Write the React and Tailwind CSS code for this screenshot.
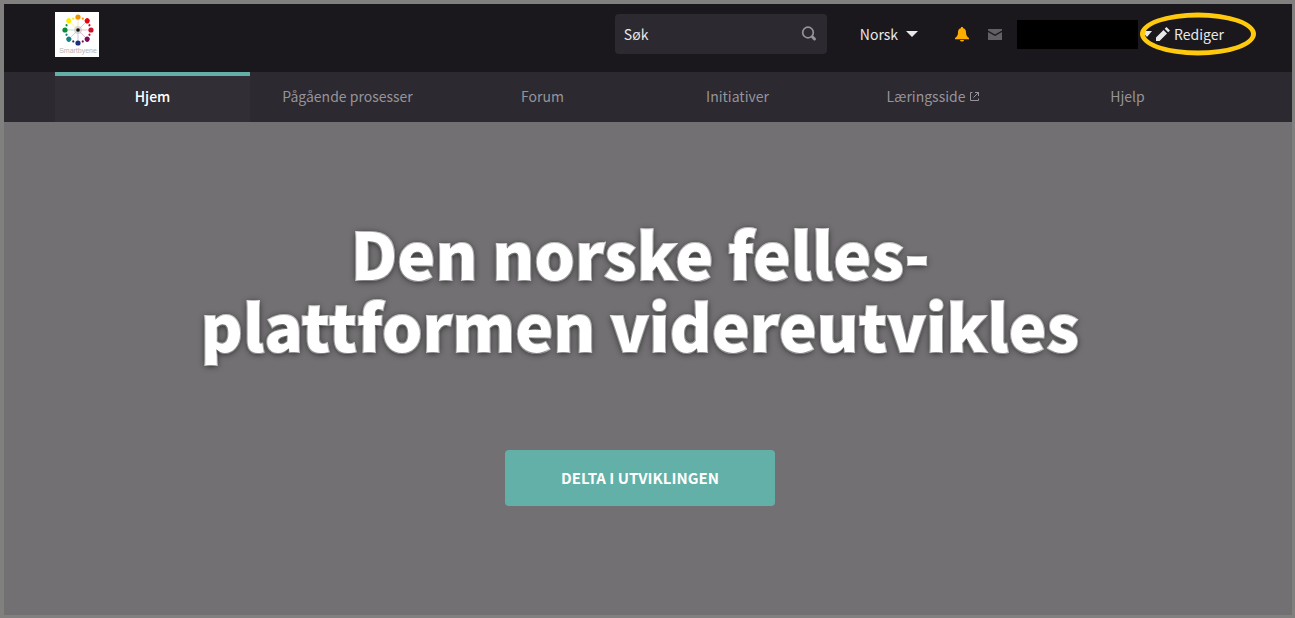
const navItems = [
  { label: 'Hjem', active: true },
  { label: 'Pågående prosesser' },
  { label: 'Forum' },
  { label: 'Initiativer' },
  { label: 'Læringsside', external: true },
  { label: 'Hjelp' },
];

// big and small dots of the logo wheel, clockwise from the top
const wheelColors = [
  '#f39200', '#e30613', '#c8102e', '#7d0a5c',
  '#1d2f7c', '#12807f', '#0b8a3a', '#ffed00',
];

function Logo() {
  return (
    <a href="#" aria-label="Smartbyene" className="block shrink-0 bg-white">
      <svg width="44" height="45" viewBox="0 0 44 45">
        {wheelColors.map((color, i) => (
          <g key={color} transform={`rotate(${i * 45} 23 18)`} fill={color}>
            <path d="M23 18V7" stroke={color} strokeWidth="0.5" opacity="0.5" />
            <circle cx="23" cy="5" r="2.6" />
            <circle cx="23" cy="5.6" r="1.1" transform="rotate(22.5 23 18)" />
          </g>
        ))}
        <circle cx="23" cy="18" r="4" fill="#bbb" opacity="0.5" />
        <circle cx="23" cy="18" r="1.8" fill="#111" />
        <text x="23" y="41" textAnchor="middle" fontSize="7" fill="#b4b4b4" fontFamily="Liberation Sans, sans-serif">
          Smartbyene
        </text>
      </svg>
    </a>
  );
}

function SearchBox() {
  return (
    <form className="flex h-10 w-[212px] items-center rounded bg-[#2c2930] px-[9px]">
      <input
        type="search"
        aria-label="Søk"
        placeholder="Søk"
        className="min-w-0 flex-1 bg-transparent outline-none placeholder:text-[#e8e8e8] placeholder:opacity-100"
      />
      <button type="submit" aria-label="Søk" className="text-[#96949a]">
        <svg width="18" height="18" viewBox="0 0 18 18" fill="none" stroke="currentColor">
          <circle cx="8" cy="7.5" r="5.3" strokeWidth="1.7" />
          <path d="M12.500 12l2 2" strokeWidth="3" strokeLinecap="round" />
        </svg>
      </button>
    </form>
  );
}

function TopBar() {
  return (
    <header className="bg-[#1a181d] pr-4 text-[#e8e8e8]">
      <div className="mx-auto flex h-[68px] max-w-[1170px] items-center pb-2">
        <Logo />
        <div className="mr-px ml-auto flex items-center">
          <SearchBox />
          <button className="ml-[33px] flex items-center gap-2">
            Norsk
            <svg width="12" height="6" viewBox="0 0 12 6" fill="currentColor">
              <path d="M0 0h12L6 6z" />
            </svg>
          </button>
          <a href="#" aria-label="Varsler" className="ml-[37px] text-[#ffae00]">
            <svg width="14" height="15" viewBox="0 0 14 15" fill="currentColor">
              <path d="M7 0c-.8 0-1.200.5-1.200 1.200C3.700 1.700 3 3.400 3 5.200 3 8 2 9.500 0 11v1.200h14V11c-2-1.500-3-3-3-5.800 0-1.800-.7-3.500-2.800-4C8.200.5 7.800 0 7 0zM5 13a2 1.600 0 0 0 4 0z" />
            </svg>
          </a>
          <a href="#" aria-label="Meldinger" className="ml-[19px] text-[#626065]">
            <svg width="14" height="11" viewBox="0 0 14 11" fill="currentColor">
              <path d="M0 0h14v1.500L7 5.500 0 1.500zM0 3l7 4 7-4v8H0z" />
            </svg>
          </a>
          <button aria-label="Brukermeny" className="ml-[15px] flex items-center gap-1">
            <span className="h-[29px] w-[121px] bg-black" />
            <svg width="10" height="6" viewBox="0 0 10 6" fill="currentColor">
              <path d="M0 0h10L5 6z" />
            </svg>
          </button>
          <a href="#" className="relative ml-1 flex items-center gap-1">
            <svg width="14" height="14" viewBox="0 0 14 14" fill="currentColor">
              <path d="M0 14v-3.500l7.500-7.500 3.500 3.500L3.500 14zM8.700 1.800L10.500 0 14 3.500l-1.800 1.800z" />
            </svg>
            Rediger
            <span className="absolute top-1/2 -right-8 -left-4 h-[43px] -translate-y-1/2 rounded-[50%] border-5 border-[#ffc90e]" />
          </a>
        </div>
      </div>
    </header>
  );
}

function MainNav() {
  return (
    <nav className="bg-[#2c2930] pr-4">
      <ul className="mx-auto grid h-[50px] max-w-[1170px] grid-cols-6">
        {navItems.map((item) => (
          <li key={item.label}>
            <a
              href="#"
              className={
                item.active
                  ? 'flex h-full items-center justify-center border-t-4 border-[#62b0a7] bg-[#312e35] pb-1.5 font-medium text-white'
                  : 'flex h-full items-center justify-center gap-1 pb-0.5 text-[#96949a]'
              }
            >
              {item.label}
              {item.external && (
                <svg width="9" height="9" viewBox="0 0 9 9" fill="none" stroke="currentColor">
                  <path d="M2.500.5h-2v8h8v-2M5 .5h3.500V4M8.500.5L3.500 5.500" />
                </svg>
              )}
            </a>
          </li>
        ))}
      </ul>
    </nav>
  );
}

export default function App() {
  return (
    <div className="flex min-h-screen flex-col border-t-4 border-r-3 border-b-3 border-l-4 border-[#80807f] bg-[#737073] font-['Noto_Sans_CJK_JP',sans-serif] text-sm">
      <TopBar />
      <MainNav />
      <main className="flex flex-1 flex-col items-center pt-[94px] pr-4 text-center text-white">
        <h1 className="text-[64px] leading-[72px] font-black [-webkit-text-stroke:2px_white] [paint-order:stroke_fill] [text-shadow:0_1px_6px_#222]">
          Den norske felles-
          <br />
          plattformen videreutvikles
        </h1>
        <a
          href="#"
          className="mt-[90px] flex h-14 w-[270px] items-center justify-center rounded bg-[#62b0a7] text-[15px] font-bold uppercase"
        >
          Delta i utviklingen
        </a>
      </main>
    </div>
  );
}
